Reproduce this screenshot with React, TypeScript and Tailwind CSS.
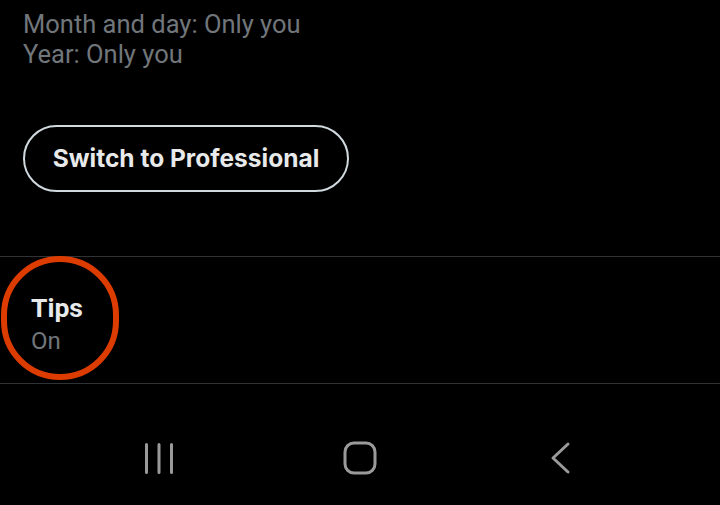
import React from "react"

export default function App() {
  return (
    <div className="relative h-[505px] w-[720px] overflow-hidden bg-black" style={{ fontFamily: "Roboto, sans-serif" }}>
      {/* Birthday visibility */}
      <div className="px-[23px] pt-[9px] text-[25.5px] leading-[30px] text-[#71767b]">
        <p>Month and day: Only you</p>
        <p>Year: Only you</p>
      </div>

      {/* Professional button */}
      <div className="px-[23px] pt-[56px]">
        <button
          className="flex h-[67px] w-[326px] items-center justify-center rounded-full border-2 border-[#cfd9de] text-[24.5px] font-bold text-[#e7e9ea]"
          style={{ fontFamily: "Inter, sans-serif" }}
        >
          Switch to Professional
        </button>
      </div>

      {/* Tips */}
      <div className="mt-[64px] h-[128px] border-y border-[#2f3336] px-[31px] pt-[36px]">
        <p className="text-[26.5px] font-bold leading-[30px] text-[#e7e9ea]">Tips</p>
        <p className="mt-[3px] text-[24px] leading-[30px] text-[#71767b]">On</p>
      </div>

      {/* Highlight ring */}
      <div className="pointer-events-none absolute left-[1px] top-[256px] h-[124px] w-[118px] rounded-full border-[6px] border-[#dc3c00]" />

      {/* Android nav bar */}
      <div className="flex items-center justify-center gap-[161px] pt-[57px]">
        <div className="flex w-[40px] justify-center">
          <svg width="32" height="34" viewBox="0 0 32 34" fill="none" stroke="#9a9a9a" strokeWidth="3" strokeLinecap="round">
            <path d="M3.5 3.5v28M16 3.5v28M28.5 3.5v28" />
          </svg>
        </div>
        <div className="flex w-[40px] justify-center">
          <svg width="34" height="34" viewBox="0 0 34 34" fill="none" stroke="#9a9a9a" strokeWidth="3">
            <rect x="2" y="2" width="30" height="30" rx="9" />
          </svg>
        </div>
        <div className="flex w-[40px] justify-center">
          <svg width="22" height="34" viewBox="0 0 22 34" fill="none" stroke="#9a9a9a" strokeWidth="3" strokeLinecap="round" strokeLinejoin="round">
            <path d="M18 3L3 17l15 14" />
          </svg>
        </div>
      </div>
    </div>
  )
}
